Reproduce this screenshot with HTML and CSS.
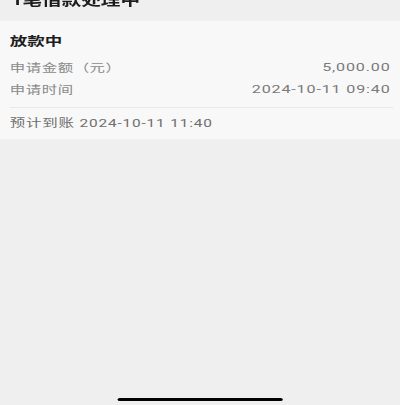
FILE: index.html
```html
<!DOCTYPE html>
<html lang="zh-CN">
<head>
    <meta charset="UTF-8">
    <meta name="viewport" content="width=device-width, initial-scale=1.0">
    <title>借款处理中</title>
    <link rel="stylesheet" href="styles.css">
</head>
<body>
    <div class="screen">
        <div class="header">
            <div class="page-title">1笔借款处理中</div>
        </div>
        <div class="card">
            <div class="card-title">放款中</div>
            <div class="row first">
                <span class="label">申请金额（元）</span>
                <span class="value">5,000.00</span>
            </div>
            <div class="row">
                <span class="label">申请时间</span>
                <span class="value">2024-10-11 09:40</span>
            </div>
            <div class="divider"></div>
            <div class="eta">预计到账 2024-10-11 11:40</div>
        </div>
        <div class="spacer"></div>
        <div class="home-bar"></div>
    </div>
</body>
</html>
```

FILE: styles.css
```css
html, body {
    margin: 0;
    padding: 0;
    background-color: #efefef;
    overflow: hidden;
}
body {
    font-family: Roboto, "Noto Sans CJK SC", sans-serif;
    height: 405px;
}
/* the capture is stretched wide, so the screen is laid out narrow and scaled */
.screen {
    width: 286px;
    height: 405px;
    display: flex;
    flex-direction: column;
    transform: scaleX(1.4);
    transform-origin: 0 0;
}
.header {
    height: 21px;
    padding: 0 8px;
    overflow: hidden;
}
.page-title {
    margin-top: -7px;
    font-size: 14px;
    line-height: 14px;
    font-weight: 700;
    color: #1c1c1c;
}
.card {
    background-color: #f8f8f8;
    padding: 11px 7px 5px 7px;
}
.card-title {
    font-size: 12.5px;
    line-height: 20px;
    font-weight: 700;
    color: #1e1e1e;
}
.row {
    display: flex;
    justify-content: space-between;
    align-items: center;
    height: 22px;
    font-size: 11px;
}
.row.first {
    margin-top: 4px;
}
.label {
    color: #8a8a8a;
    letter-spacing: 0.4px;
}
.value {
    color: #7a7a7a;
    font-size: 11.5px;
    letter-spacing: 0.6px;
}
.divider {
    height: 1px;
    margin: 7px -2px 0 0;
    background-color: #e9e9e9;
}
.eta {
    margin-top: 6px;
    font-size: 11px;
    line-height: 20px;
    color: #6f6f6f;
    letter-spacing: 0.6px;
}
.spacer {
    flex: 1;
}
.home-bar {
    align-self: center;
    width: 118px;
    height: 3px;
    margin-bottom: 4px;
    border-radius: 2px;
    background-color: #000;
}
```
